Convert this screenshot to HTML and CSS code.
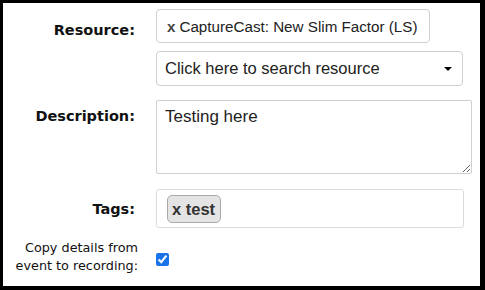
FILE: index.html
```html
<!DOCTYPE html>
<html>
<head>
    <title>Recording details</title>
    <link rel="stylesheet" href="styles.css">
</head>
<body>
    <div class="panel">
        <div class="form-grid">
            <div class="label label-middle">Resource:</div>
            <div class="field">
                <div class="chosen-box resource-box">
                    <span class="chosen-x">x</span> CaptureCast: New Slim Factor (LS)
                </div>
            </div>

            <div class="label"></div>
            <div class="field">
                <div class="chosen-box select-box">
                    <span>Click here to search resource</span>
                    <span class="caret"></span>
                </div>
            </div>

            <div class="label label-top">Description:</div>
            <div class="field">
                <textarea class="desc-box">Testing here</textarea>
            </div>

            <div class="label label-middle">Tags:</div>
            <div class="field">
                <div class="tags-box">
                    <span class="tag">x test</span>
                </div>
            </div>

            <div class="label label-small">Copy details from<br>event to recording:</div>
            <div class="field field-bottom">
                <input type="checkbox" class="copy-check" checked>
            </div>
        </div>
    </div>
</body>
</html>
```

FILE: styles.css
```css
html, body {
    margin: 0;
    padding: 0;
    height: 100%;
}

body {
    background: #000;
    padding: 3px 5px 4px 3px;
    box-sizing: border-box;
}

.panel {
    background: #fff;
    width: 477px;
    height: 283px;
    box-sizing: border-box;
    padding: 6px 0 0 0;
}

.form-grid {
    display: grid;
    grid-template-columns: 132px 1fr;
    column-gap: 21px;
}

.label {
    font-family: "DejaVu Sans", Verdana, sans-serif;
    font-weight: bold;
    font-size: 14.5px;
    color: #111;
    text-align: right;
}

.label-middle {
    display: flex;
    align-items: center;
    justify-content: flex-end;
}

.label-top {
    padding-top: 8px;
}

.label-small {
    font-weight: normal;
    font-size: 12.8px;
    line-height: 18px;
    margin-top: 11px;
    margin-right: -3px;
}

.field {
    font-family: "Liberation Sans", Arial, sans-serif;
}

.field-bottom {
    display: flex;
    align-items: flex-end;
    padding-bottom: 9px;
}

.chosen-box {
    border: 1px solid #cfcfcf;
    border-radius: 4px;
    box-sizing: border-box;
    display: flex;
    align-items: center;
    color: #222;
}

.resource-box {
    width: 274px;
    height: 34px;
    padding-left: 10px;
    font-size: 15.2px;
    margin-bottom: 8px;
}

.chosen-x {
    font-weight: bold;
    color: #444;
    margin-right: 4px;
}

.select-box {
    width: 307px;
    height: 35px;
    padding: 0 10px 0 8px;
    font-size: 16.5px;
    justify-content: space-between;
    margin-bottom: 14px;
}

.caret {
    width: 0;
    height: 0;
    border-left: 4px solid transparent;
    border-right: 4px solid transparent;
    border-top: 4px solid #000;
}

.desc-box {
    display: block;
    width: 316px;
    height: 74px;
    box-sizing: border-box;
    border: 1px solid #cfcfcf;
    border-radius: 2px;
    padding: 6px 8px;
    font-family: "Liberation Sans", Arial, sans-serif;
    font-size: 17px;
    color: #222;
    margin: 0 0 15px 0;
}

.tags-box {
    width: 308px;
    height: 39px;
    box-sizing: border-box;
    border: 1px solid #dcdcdc;
    border-radius: 3px;
    padding: 5px 10px;
}

.tag {
    display: inline-block;
    background: #e4e4e4;
    border: 1px solid #aaa;
    border-radius: 5px;
    padding: 0 5px 0 4px;
    height: 26px;
    line-height: 26px;
    font-weight: bold;
    font-size: 16.5px;
    color: #333;
}

.copy-check {
    margin: 0;
    width: 13px;
    height: 13px;
    accent-color: #1a73e8;
}
```
